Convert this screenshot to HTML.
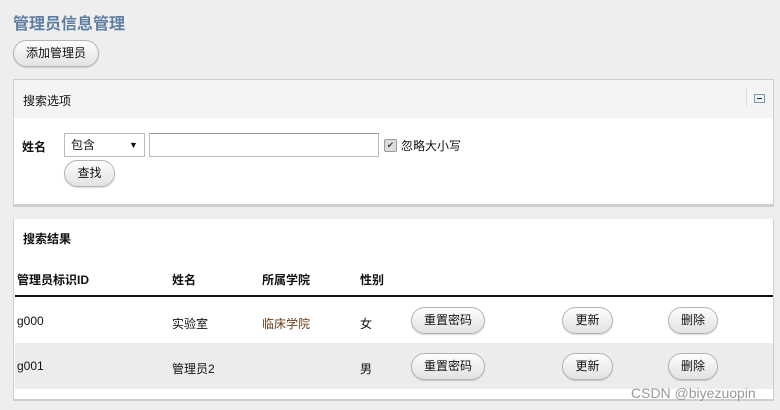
<!DOCTYPE html>
<html><head><meta charset="utf-8"><style>
body{margin:0;width:780px;height:410px;background:#eeeeee;font-family:"Liberation Sans","Noto Sans CJK SC",sans-serif;font-size:12px;color:#111;position:relative;overflow:hidden}
.a{position:absolute}
.btn{position:absolute;border:1px solid #b4b4b4;border-radius:14px;background:linear-gradient(#fdfdfd,#e2e2e2);box-shadow:0 1px 1px rgba(0,0,0,.15);text-align:center;font-size:12px;color:#111;box-sizing:border-box}
</style></head><body>
<div class="a" style="left:13px;top:10px;font-size:16px;color:#5d7fa3;font-weight:bold">管理员信息管理</div>
<div class="btn" style="left:13px;top:40px;width:86px;height:27px;line-height:25px">添加管理员</div>

<div class="a" style="left:13px;top:79px;width:761px;height:128px;background:#fff;border:1px solid #cfcfcf;border-bottom:3px solid #cfcfcf;box-sizing:border-box">
 <div class="a" style="left:0;top:0;right:0;height:38px;background:#f4f4f4"></div>
 <div class="a" style="left:9px;top:12px">搜索选项</div>
 <div class="a" style="left:732px;top:8px;width:1px;height:18px;background:#ddd"></div>
 <div class="a" style="left:740px;top:14px;width:9px;height:7px;border:1px solid #7a98b8;background:#eef3f8"><div style="margin:3px 2px 0;height:1px;background:#222"></div></div>
 <div class="a" style="left:8px;top:58px;font-weight:bold">姓名</div>
 <div class="a" style="left:50px;top:53px;width:81px;height:24px;border:1px solid #bbb;box-sizing:border-box;line-height:22px;padding-left:6px">包含<span style="position:absolute;left:64px;top:0;font-size:9px">▼</span></div>
 <div class="a" style="left:135px;top:53px;width:230px;height:24px;border:1px solid #bbb;border-top-color:#999;box-sizing:border-box"></div>
 <div class="a" style="left:370px;top:59px;width:11px;height:11px;border:1px solid #999;border-radius:2px;background:#ddd;font-size:9px;line-height:11px;text-align:center;color:#444">✔</div>
 <div class="a" style="left:387px;top:57px">忽略大小写</div>
 <div class="btn" style="left:50px;top:80px;width:51px;height:27px;line-height:25px">查找</div>
</div>

<div class="a" style="left:13px;top:219px;width:761px;height:182px;background:#fff;border-left:1px solid #cfcfcf;border-right:1px solid #cfcfcf;border-bottom:2px solid #cfcfcf;box-sizing:border-box">
 <div class="a" style="left:9px;top:11px;font-weight:bold">搜索结果</div>
 <div class="a" style="left:3px;top:52px;font-weight:bold">管理员标识ID</div>
 <div class="a" style="left:158px;top:52px;font-weight:bold">姓名</div>
 <div class="a" style="left:248px;top:52px;font-weight:bold">所属学院</div>
 <div class="a" style="left:346px;top:52px;font-weight:bold">性别</div>
 <div class="a" style="left:1px;top:76px;width:758px;height:2px;background:#111"></div>
 <div class="a" style="left:3px;top:95px">g000</div>
 <div class="a" style="left:158px;top:96px">实验室</div>
 <div class="a" style="left:248px;top:96px;color:#6b3c1a">临床学院</div>
 <div class="a" style="left:346px;top:96px">女</div>
 <div class="a" style="left:1px;top:124px;width:758px;height:46px;background:#ececec"></div>
 <div class="a" style="left:3px;top:140px">g001</div>
 <div class="a" style="left:158px;top:141px">管理员2</div>
 <div class="a" style="left:346px;top:141px">男</div>
 <div class="btn" style="left:397px;top:88px;width:74px;height:27px;line-height:25px">重置密码</div>
 <div class="btn" style="left:548px;top:88px;width:51px;height:27px;line-height:25px">更新</div>
 <div class="btn" style="left:654px;top:88px;width:50px;height:27px;line-height:25px">删除</div>
 <div class="btn" style="left:397px;top:134px;width:74px;height:27px;line-height:25px">重置密码</div>
 <div class="btn" style="left:548px;top:134px;width:51px;height:27px;line-height:25px">更新</div>
 <div class="btn" style="left:654px;top:134px;width:50px;height:27px;line-height:25px">删除</div>
</div>
<div class="a" style="left:631px;top:385px;font-size:14px;color:#999">CSDN @biyezuopin</div>
</body></html>
